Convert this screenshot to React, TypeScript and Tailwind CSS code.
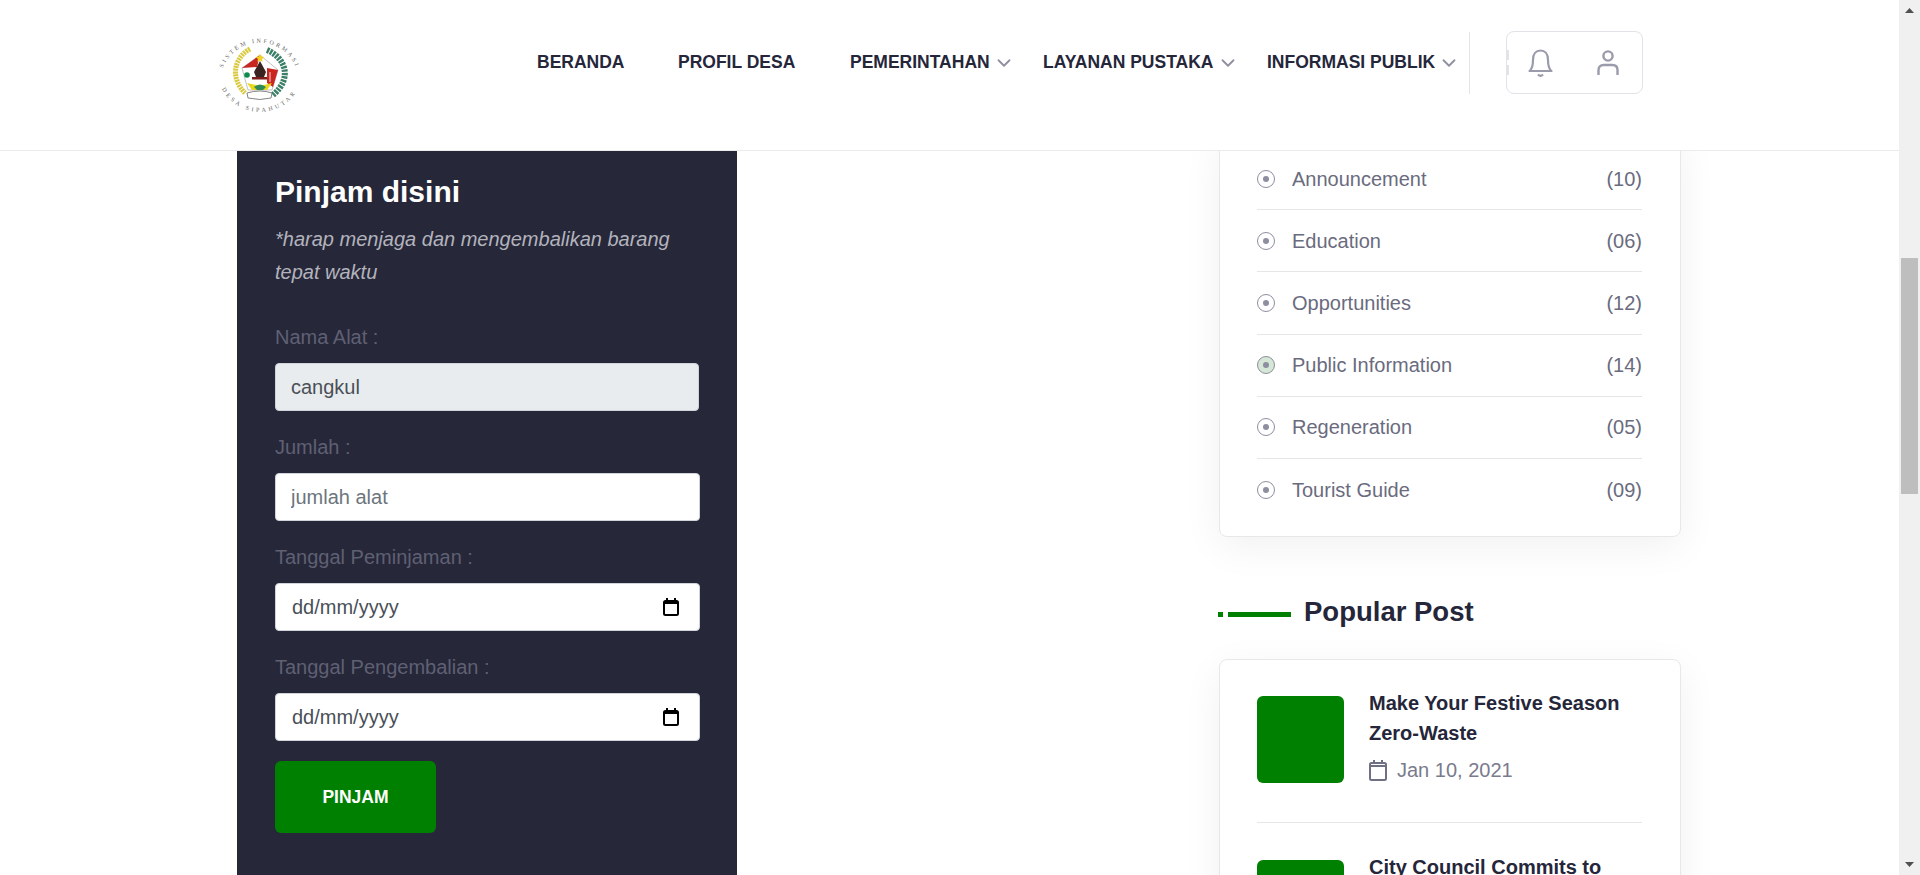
import type { ReactNode } from 'react';
import { ChevronDown } from 'lucide-react';

const navItems = [
  { label: 'BERANDA', caret: false, cls: 'w-[141px]' },
  { label: 'PROFIL DESA', caret: false, cls: 'w-[172px]' },
  { label: 'PEMERINTAHAN', caret: true, cls: 'w-[193px]' },
  { label: 'LAYANAN PUSTAKA', caret: true, cls: 'w-[224px]' },
  { label: 'INFORMASI PUBLIK', caret: true, cls: 'w-[202px]' },
];

const categories = [
  { name: 'Announcement', count: '(10)', active: false },
  { name: 'Education', count: '(06)', active: false },
  { name: 'Opportunities', count: '(12)', active: false },
  { name: 'Public Information', count: '(14)', active: true },
  { name: 'Regeneration', count: '(05)', active: false },
  { name: 'Tourist Guide', count: '(09)', active: false },
];

function Logo() {
  return (
    <svg width="84" height="84" viewBox="0 0 84 84" className="shrink-0">
      <defs>
        <path id="logo-top" d="M5 35 A39 39 0 0 1 78 35" />
        <path id="logo-bottom" d="M4 56 A43 43 0 0 0 80 56" />
      </defs>
      <text fontSize="6" fontFamily="Liberation Serif, serif" fill="#666" letterSpacing="2.4">
        <textPath href="#logo-top">SISTEM INFORMASI</textPath>
      </text>
      <text fontSize="6" fontFamily="Liberation Serif, serif" fill="#666" letterSpacing="2.9">
        <textPath href="#logo-bottom">DESA SIPAHUTAR</textPath>
      </text>
      <path d="M32 16 C17 24 11 44 27 60" fill="none" stroke="#d9c93c" strokeWidth="5" strokeDasharray="2 0.8" />
      <path d="M49 17 C66 24 76 44 55 62" fill="none" stroke="#3b7f66" strokeWidth="6" strokeDasharray="2.4 1" />
      <path d="M42 22 L60 37 L54 57 L30 57 L24 35 Z" fill="#fff" stroke="#999" strokeWidth="0.6" />
      <path d="M42 22 L24 35 L39 34 Z" fill="#c8261e" />
      <path d="M49 35 L60 37 L55 54 L49 50 Z" fill="#c8261e" />
      <path d="M52 39 V49" stroke="#fff" strokeWidth="0.8" />
      <path d="M42 28 L36 39 L38 44 L46 44 L48 39 Z" fill="#3b2420" />
      <rect x="34" y="44" width="15" height="2.5" fill="#7a1f1a" />
      <circle cx="29" cy="42" r="2.8" fill="#0e8a4a" />
      <path d="M42 21 l1.3 2.6 2.8 .4 -2 2 .5 2.8 -2.6 -1.4 -2.6 1.4 .5 -2.8 -2 -2 2.8 -.4 Z" fill="#f2d21d" />
      <path d="M29 50 L38 52 L46 52 L54 50 L49 57 L34 57 Z" fill="#e7d81f" />
      <path d="M36 54 Q42 49 48 54 L45 57 L39 57 Z" fill="#2e8b57" />
      <path d="M29 60 Q42 56 54 60 L53 65 Q42 68 30 65 Z" fill="#fff" stroke="#777" strokeWidth="0.9" />
    </svg>
  );
}

function Field({ label, children }: { label: string; children: ReactNode }) {
  return (
    <div className="mb-[20px]">
      <div className="mb-[10px] text-[20px] leading-[32px] text-[#5f6073]">{label}</div>
      {children}
    </div>
  );
}

function DateField() {
  return (
    <div className="flex h-[48px] w-[425px] items-center justify-between rounded-[4px] border border-[#ced4da] bg-white pr-[20px] pl-[16px]">
      <input
        placeholder="dd/mm/yyyy"
        className="w-[200px] text-[20px] text-[#495057] outline-none placeholder:text-[#495057]"
      />
      <svg width="16" height="18" viewBox="0 0 16 18" fill="none" stroke="#000" strokeWidth="2">
        <rect x="1" y="3" width="14" height="14" rx="1.5" />
        <path d="M1 5 H15 M4 0 V3 M12 0 V3" />
      </svg>
    </div>
  );
}

export default function App() {
  return (
    <div className="flex h-[875px] overflow-hidden bg-white font-['Liberation_Sans',Arial,sans-serif]">
      <div className="flex min-w-0 flex-1 flex-col">
        <header className="flex h-[151px] shrink-0 items-center border-b border-[#ebebeb] bg-white pl-[218px]">
          <Logo />
          <div className="mt-[31px] ml-[235px] flex h-[63px] items-center self-start">
            <nav className="flex items-center">
              {navItems.map((item) => (
                <div key={item.label} className={`flex items-center ${item.cls}`}>
                  <span className="text-[17.5px] font-bold text-[#25263a]">{item.label}</span>
                  {item.caret && <ChevronDown className="ml-[3px] h-[22px] w-[22px] text-[#8f90a0]" strokeWidth={2} />}
                </div>
              ))}
            </nav>
            <div className="h-[62px] w-px bg-[#e4e4e8]" />
            <div className="relative ml-[36px] flex h-[63px] w-[137px] items-center gap-[44px] rounded-[8px] border border-[#e2e2e8] pl-[21px]">
              <span className="absolute top-[18px] left-0 h-[10px] w-[2px] bg-[#e2e2e8]" />
              <span className="absolute top-[33px] left-0 h-[10px] w-[2px] bg-[#e2e2e8]" />
              <svg width="25" height="28" viewBox="0 0 25 28" fill="none" stroke="#9a9bab" strokeWidth="2.2">
                <path d="M1.5 22 C4 20 5 17 5 11 C5 5 8 1.5 12.5 1.5 C17 1.5 20 5 20 11 C20 17 21 20 23.5 22 Z" strokeLinejoin="round" />
                <path d="M10 25.5 Q12.5 28 15 25.5" />
              </svg>
              <svg width="22" height="26" viewBox="0 0 22 26" fill="none" stroke="#9a9bab" strokeWidth="2.4">
                <circle cx="11" cy="6" r="4.6" />
                <path d="M1.5 25 V20 C1.5 17 3.5 15 6.5 15 H15.5 C18.5 15 20.5 17 20.5 20 V25" />
              </svg>
            </div>
          </div>
        </header>

        <main className="flex min-h-0 flex-1 overflow-hidden pl-[237px]">
          <section className="w-[500px] shrink-0 bg-[#262739] px-[38px] pt-[19px]">
            <h3 className="text-[30px] font-bold leading-[44px] text-white">Pinjam disini</h3>
            <p className="mt-[9px] mb-[32px] text-[20px] italic leading-[33px] text-[#b3b3bc]">
              *harap menjaga dan mengembalikan barang tepat waktu
            </p>
            <Field label="Nama Alat :">
              <div className="flex h-[48px] items-center rounded-[4px] border border-[#ced4da] bg-[#e9ecef] px-[15px] text-[20px] text-[#495057]">
                cangkul
              </div>
            </Field>
            <Field label="Jumlah :">
              <input
                placeholder="jumlah alat"
                className="block h-[48px] w-[425px] rounded-[4px] border border-[#ced4da] bg-white px-[15px] text-[20px] text-[#495057] outline-none placeholder:text-[#6c757d]"
              />
            </Field>
            <Field label="Tanggal Peminjaman :">
              <DateField />
            </Field>
            <Field label="Tanggal Pengembalian :">
              <DateField />
            </Field>
            <button className="h-[72px] w-[161px] rounded-[6px] bg-[#008000] text-[17.5px] font-bold text-white">PINJAM</button>
          </section>

          <aside className="-mt-[20px] ml-[482px] w-[462px] shrink-0">
            <div className="rounded-[8px] border border-[#e8e8e8] bg-white pt-[16px] pr-[38px] pb-[15px] pl-[37px] shadow-[0_10px_40px_rgba(0,0,0,0.06)]">
              <ul>
                {categories.map((c, i) => (
                  <li
                    key={c.name}
                    className={`flex h-[62.2px] items-center justify-between text-[20px] text-[#6a6b7e] ${i < categories.length - 1 ? 'border-b border-[#e6e6e6]' : ''}`}
                  >
                    <span className="flex items-center">
                      <span
                        className={`mr-[17px] flex h-[18px] w-[18px] items-center justify-center rounded-full border border-[#8d8ea0] ${c.active ? 'bg-[#d5e7d5]' : ''}`}
                      >
                        <span className="h-[6px] w-[6px] rounded-full bg-[#8d8ea0]" />
                      </span>
                      {c.name}
                    </span>
                    <span>{c.count}</span>
                  </li>
                ))}
              </ul>
            </div>

            <div className="mt-[55px] mb-[27px] -ml-[1px] flex items-center">
              <span className="mt-[5px] h-[5px] w-[5px] bg-[#008000]" />
              <span className="mt-[5px] ml-[5px] h-[5px] w-[63px] bg-[#008000]" />
              <h3 className="ml-[13px] text-[27.5px] font-bold leading-[40px] text-[#25263a]">Popular Post</h3>
            </div>

            <div className="rounded-[8px] border border-[#e8e8e8] bg-white pt-[36px] pr-[38px] pl-[37px] shadow-[0_10px_40px_rgba(0,0,0,0.06)]">
              <div className="flex border-b border-[#e6e6e6] pb-[37px]">
                <div className="h-[87px] w-[87px] shrink-0 rounded-[6px] bg-[#008000]" />
                <div className="-mt-[8px] ml-[25px]">
                  <div className="text-[20px] font-bold leading-[30px] text-[#25263a]">Make Your Festive Season Zero-Waste</div>
                  <div className="mt-[7px] flex items-center text-[20px] leading-[30px] text-[#7a7b8c]">
                    <svg width="18" height="21" viewBox="0 0 18 21" fill="none" stroke="#6f7083" strokeWidth="2" className="mr-[10px]">
                      <rect x="1" y="3" width="16" height="17" rx="1.5" />
                      <path d="M1 6 H17 M5 0 V3 M13 0 V3" />
                    </svg>
                    Jan 10, 2021
                  </div>
                </div>
              </div>
              <div className="flex pt-[37px]">
                <div className="h-[87px] w-[87px] shrink-0 rounded-[6px] bg-[#008000]" />
                <div className="-mt-[8px] ml-[25px] text-[20px] font-bold leading-[30px] text-[#25263a]">City Council Commits to</div>
              </div>
            </div>
          </aside>
        </main>
      </div>

      <div className="flex w-[21px] shrink-0 flex-col items-center justify-between bg-[#f0f0f0] py-[8px]">
        <svg width="9" height="5" viewBox="0 0 9 5" fill="#505050">
          <path d="M4.5 0 L9 5 H0 Z" />
        </svg>
        <svg width="9" height="5" viewBox="0 0 9 5" fill="#505050">
          <path d="M0 0 H9 L4.5 5 Z" />
        </svg>
      </div>
      <div className="absolute top-[258px] right-[2px] h-[236px] w-[17px] bg-[#bebebe]" />
    </div>
  );
}
